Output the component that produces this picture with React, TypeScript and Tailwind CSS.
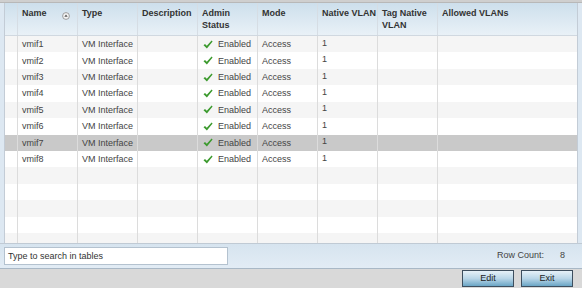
import React from "react";

interface Irow {
  name: string;
  type: string;
  desc: string;
  enabled: boolean;
  mode: string;
  vlan: string;
  tag: string;
  allowed: string;
}

const rows: Irow[] = Array.from({ length: 8 }, (_, i) => ({
  name: `vmif${i + 1}`,
  type: "VM Interface",
  desc: "",
  enabled: true,
  mode: "Access",
  vlan: "1",
  tag: "",
  allowed: "",
}));

const cols = "grid grid-cols-[13px_60px_60px_60px_60px_60px_60px_60px_141px]";

const Check = () => (
  <svg width="10" height="9" viewBox="0 0 10 9" className="shrink-0">
    <path d="M0.5 5.2 L2 4 L3.8 5.8 L8.6 0.6 L9.6 1.6 L3.9 8.4 Z" fill="#3c9a2e" />
  </svg>
);

const SortIcon = () => (
  <svg width="8" height="8" viewBox="0 0 8 8">
    <circle cx="4" cy="4" r="3.4" fill="#f4f4f4" stroke="#8a8a8a" strokeWidth="0.8" />
    <path d="M2.3 4.8 L4 2.6 L5.7 4.8 Z" fill="#555" />
  </svg>
);

const Header: React.FC<{ children: React.ReactNode; last?: boolean }> = ({ children, last }) => (
  <div
    className={`h-[32px] pl-[4px] pt-[4px] font-bold text-[9px] leading-[12px] text-[#333] ${
      last ? "" : "border-r border-[#d6dde4]"
    }`}
  >
    {children}
  </div>
);

const Cell: React.FC<{ children?: React.ReactNode; last?: boolean }> = ({ children, last }) => (
  <div
    className={`h-full pl-[4px] text-[9px] leading-[16px] text-[#444] flex items-center whitespace-nowrap ${
      last ? "" : "border-r border-[#dcdcdc]"
    }`}
  >
    {children}
  </div>
);

export default function App() {
  const total = 13;
  return (
    <div
      className="w-[582px] h-[288px] bg-[#dde8f2] flex flex-col overflow-hidden"
      style={{ fontFamily: '"Liberation Sans", Arial, sans-serif' }}
    >
      <div className="h-[3px] bg-[#cfcfcf] border-b border-[#b8b8b8]" />
      <div className="pl-[4px] pr-[4px]">
        <div className="border-l border-r border-[#c3ccd6] bg-white">
          <div className={`${cols} bg-gradient-to-b from-[#cddfec] to-[#e9f1f7] border-b border-[#d0d8e0]`}>
            <Header>{""}</Header>
            <Header>
              <div className="flex justify-between pr-[7px]">
                <span>Name</span>
                <span className="mt-[5px]">
                  <SortIcon />
                </span>
              </div>
            </Header>
            <Header>Type</Header>
            <Header>Description</Header>
            <Header>
              Admin
              <br />
              Status
            </Header>
            <Header>Mode</Header>
            <Header>Native VLAN</Header>
            <Header>
              Tag Native
              <br />
              VLAN
            </Header>
            <Header last>Allowed VLANs</Header>
          </div>
          <div className="h-[207px] overflow-hidden">
            {Array.from({ length: total }, (_, i) => {
              const r = rows[i];
              const bg = i === 6 ? "bg-[#c9c9c9]" : i % 2 === 0 ? "bg-[#f5f5f5]" : "bg-white";
              return (
                <div key={i} className={`${cols} h-[16.43px] ${bg}`}>
                  <Cell />
                  <Cell>{r?.name}</Cell>
                  <Cell>{r?.type}</Cell>
                  <Cell>{r?.desc}</Cell>
                  <Cell>
                    {r && (
                      <span className="flex items-center gap-[5px] pl-[1px]">
                        <Check />
                        Enabled
                      </span>
                    )}
                  </Cell>
                  <Cell>{r?.mode}</Cell>
                  <Cell>
                    <span className="-mt-[3px]">{r?.vlan}</span>
                  </Cell>
                  <Cell>{r?.tag}</Cell>
                  <Cell last>{r?.allowed}</Cell>
                </div>
              );
            })}
          </div>
        </div>
      </div>
      <div className="h-[25px] border-t border-[#c0cad4] bg-gradient-to-b from-[#d6e4ef] to-[#e2ecf5] flex items-center pl-[4px] pr-[17px]">
        <div className="w-[224px] h-[18px] bg-white border border-[#b4c2cf] pl-[3px] text-[9px] leading-[16px] text-[#333]">
          Type to search in tables
        </div>
        <div className="ml-auto text-[9px] text-[#444] flex gap-[16px]">
          <span>Row Count:</span>
          <span>8</span>
        </div>
      </div>
      <div className="flex-1 bg-[#d9d9d9] border-t border-[#a9b8c6] flex items-start justify-end gap-[7px] pt-[1px] pr-[9px]">
        {["Edit", "Exit"].map((b) => (
          <div
            key={b}
            className="w-[52px] h-[17px] border border-[#3d4e5e] bg-gradient-to-b from-[#e6f1f8] via-[#b9d6e8] to-[#6aa6c6] text-[9px] leading-[15px] text-[#222] text-center"
          >
            {b}
          </div>
        ))}
      </div>
    </div>
  );
}
